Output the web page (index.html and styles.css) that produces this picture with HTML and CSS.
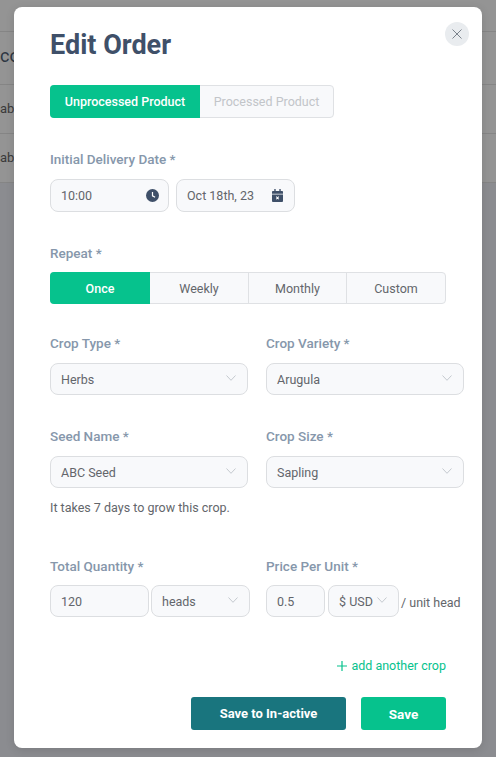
FILE: index.html
```html
<!DOCTYPE html>
<html lang="en">
<head>
    <meta charset="UTF-8">
    <meta name="viewport" content="width=device-width, initial-scale=1.0">
    <title>Edit Order</title>
    <link rel="stylesheet" href="styles.css">
</head>
<body>
    <!-- page behind the modal -->
    <div class="page">
        <div class="page-row page-row-top"></div>
        <div class="page-row page-row-head">co</div>
        <div class="page-row">ab</div>
        <div class="page-row">ab</div>
    </div>

    <div class="modal">
        <button class="close-button">
            <svg width="10" height="10" viewBox="0 0 10 10"><path d="M.5.5l9 9M9.500.5l-9 9" fill="none" stroke="#7b838c" stroke-width="1"/></svg>
        </button>

        <h1 class="title">Edit Order</h1>

        <div class="tabs">
            <div class="tab tab-active tab-product">Unprocessed Product</div>
            <div class="tab tab-muted tab-processed">Processed Product</div>
        </div>

        <div class="label label-delivery">Initial Delivery Date *</div>
        <div class="date-row">
            <div class="field field-date">
                <span>10:00</span>
                <svg class="icon-clock" width="13" height="13" viewBox="0 0 14 14"><circle cx="7" cy="7" r="7" fill="#3f5069"/><path d="M7 3.200V7.300L9.800 8.800" fill="none" stroke="#fff" stroke-width="1.300"/></svg>
            </div>
            <div class="field field-date">
                <span>Oct 18th, 23</span>
                <svg class="icon-calendar" width="11" height="13" viewBox="0 0 12 14"><path d="M2.500 0h1.500v2h4V0h1.500v2H11a1 1 0 0 1 1 1v2H0V3a1 1 0 0 1 1-1h1.500zM0 6h12v7a1 1 0 0 1-1 1H1a1 1 0 0 1-1-1z" fill="#3f5069"/><path d="M4.600 8.300l2.800 2.800M7.400 8.300l-2.800 2.800" fill="none" stroke="#fff" stroke-width="1.100"/></svg>
            </div>
        </div>

        <div class="label label-repeat">Repeat *</div>
        <div class="tabs tabs-repeat">
            <div class="tab tab-active tab-once">Once</div>
            <div class="tab tab-weekly">Weekly</div>
            <div class="tab tab-monthly">Monthly</div>
            <div class="tab tab-last">Custom</div>
        </div>

        <div class="form-grid form-grid-first">
            <div>
                <div class="label">Crop Type *</div>
                <div class="field field-select">
                    <span>Herbs</span>
                    <svg class="chevron" width="10" height="6" viewBox="0 0 10 6"><path d="M.5.500L5 5.300 9.500.5" fill="none" stroke="#c4c9cf" stroke-width="1"/></svg>
                </div>
            </div>
            <div>
                <div class="label">Crop Variety *</div>
                <div class="field field-select">
                    <span>Arugula</span>
                    <svg class="chevron" width="10" height="6" viewBox="0 0 10 6"><path d="M.5.500L5 5.300 9.500.5" fill="none" stroke="#c4c9cf" stroke-width="1"/></svg>
                </div>
            </div>
        </div>

        <div class="form-grid form-grid-second">
            <div>
                <div class="label">Seed Name *</div>
                <div class="field field-select">
                    <span>ABC Seed</span>
                    <svg class="chevron" width="10" height="6" viewBox="0 0 10 6"><path d="M.5.500L5 5.300 9.500.5" fill="none" stroke="#c4c9cf" stroke-width="1"/></svg>
                </div>
            </div>
            <div>
                <div class="label">Crop Size *</div>
                <div class="field field-select">
                    <span>Sapling</span>
                    <svg class="chevron" width="10" height="6" viewBox="0 0 10 6"><path d="M.5.500L5 5.300 9.500.5" fill="none" stroke="#c4c9cf" stroke-width="1"/></svg>
                </div>
            </div>
        </div>

        <p class="note">It takes 7 days to grow this crop.</p>

        <div class="form-grid form-grid-third">
            <div>
                <div class="label">Total Quantity *</div>
                <div class="field-group field-group-quantity">
                    <div class="field field-select field-qty"><span>120</span></div>
                    <div class="field field-select field-qty">
                        <span>heads</span>
                        <svg class="chevron" width="10" height="6" viewBox="0 0 10 6"><path d="M.5.500L5 5.300 9.500.5" fill="none" stroke="#c4c9cf" stroke-width="1"/></svg>
                    </div>
                </div>
            </div>
            <div>
                <div class="label">Price Per Unit *</div>
                <div class="field-group field-group-price">
                    <div class="field field-select field-price"><span>0.5</span></div>
                    <div class="field field-select field-currency">
                        <span>$ USD</span>
                        <svg class="chevron" width="10" height="6" viewBox="0 0 10 6"><path d="M.5.500L5 5.300 9.500.5" fill="none" stroke="#c4c9cf" stroke-width="1"/></svg>
                    </div>
                    <span class="unit-text">/ unit head</span>
                </div>
            </div>
        </div>

        <div class="add-crop">
            <svg width="10" height="10" viewBox="0 0 10 10"><path d="M5 0v10M0 5h10" fill="none" stroke="#06c28d" stroke-width="1.200"/></svg>
            <span>add another crop</span>
        </div>

        <div class="actions">
            <button class="btn btn-inactive">Save to In-active</button>
            <button class="btn btn-save">Save</button>
        </div>
    </div>
</body>
</html>
```

FILE: styles.css
```css
* {
    box-sizing: border-box;
}

html, body {
    height: 100%;
}

body {
    margin: 0;
    overflow: hidden;
    background-color: #8b8c90;
    font-family: 'Roboto', 'Liberation Sans', sans-serif;
    font-size: 12.5px;
    color: #63666b;
}

/* page behind the modal */
.page-row {
    height: 49px;
    border-bottom: 1px solid #858585;
    background-color: #949494;
    line-height: 48px;
    font-size: 13px;
    color: #3a3a3a;
    overflow: hidden;
}

.page-row-top {
    height: 32px;
}

.page-row-head {
    height: 53px;
    font-size: 18px;
    color: #2e3742;
}

.modal {
    position: absolute;
    top: 7px;
    left: 14px;
    width: 468px;
    height: 741px;
    padding: 0 36px;
    background-color: #fff;
    border-radius: 8px;
    box-shadow: 0 2px 10px rgba(0, 0, 0, 0.12);
}

.close-button {
    position: absolute;
    top: 15px;
    right: 13px;
    width: 24px;
    height: 24px;
    padding: 0;
    border: none;
    border-radius: 50%;
    background-color: #e9ecef;
    display: flex;
    align-items: center;
    justify-content: center;
}

.title {
    margin: 0;
    padding-top: 20px;
    font-size: 27px;
    line-height: 36px;
    font-weight: 700;
    color: #3f5069;
}

/* tabs */
.tabs {
    display: flex;
    width: 284px;
    height: 33px;
    margin-top: 22px;
    border: 1px solid #dfe1e4;
    border-radius: 4px;
    background-color: #f8f9fb;
}

.tabs-repeat {
    width: 396px;
    height: 32px;
    margin-top: 10px;
}

.tab {
    display: flex;
    align-items: center;
    justify-content: center;
    font-size: 12.5px;
    color: #63666b;
    margin: -1px 0;
}

.tab-active {
    margin-left: -1px;
    background-color: #06c28d;
    color: #fff;
    font-weight: 500;
    border-radius: 4px 0 0 4px;
}

.tab-product {
    width: 150px;
}

.tab-processed {
    flex: 1;
}

.tab-muted {
    color: #c2c5c9;
}

.tab-once {
    width: 100px;
}

.tab-weekly {
    width: 99px;
    border-right: 1px solid #dfe1e4;
}

.tab-monthly {
    width: 98px;
    border-right: 1px solid #dfe1e4;
}

.tab-last {
    flex: 1;
}

/* labels + fields */
.label {
    font-size: 13.5px;
    line-height: 18px;
    font-weight: 500;
    color: #8697ab;
}

.label-delivery {
    margin-top: 32px;
}

.label-repeat {
    margin-top: 32px;
}

.date-row {
    display: flex;
    gap: 7px;
    margin-top: 11px;
}

.field {
    display: flex;
    align-items: center;
    justify-content: space-between;
    height: 32px;
    padding: 0 10px;
    border: 1px solid #dcdee1;
    border-radius: 8px;
    background-color: #f8f9fb;
    font-size: 12.5px;
    color: #63666b;
}

.field-date {
    width: 119px;
    height: 33px;
}

.icon-clock {
    flex-shrink: 0;
    margin-right: -1px;
}

.icon-calendar {
    flex-shrink: 0;
    margin-right: 1px;
}

.form-grid {
    display: grid;
    grid-template-columns: 198px 198px;
    gap: 18px;
    width: 414px;
}

.form-grid-first {
    margin-top: 30px;
}

.form-grid-second {
    margin-top: 32px;
}

.form-grid-third {
    margin-top: 41px;
}

.form-grid .label {
    margin-bottom: 11px;
}

.form-grid-third .label {
    margin-bottom: 10px;
}

.chevron {
    flex-shrink: 0;
    margin-top: -2px;
    margin-right: 1px;
}

.note {
    margin: 12px 0 0;
    line-height: 16px;
    font-size: 12.5px;
    color: #63666b;
}

.field-group {
    display: flex;
    align-items: center;
}

.field-group-quantity {
    gap: 2px;
}

.field-qty {
    width: 99px;
    flex-shrink: 0;
}

.field-group-price {
    gap: 3px;
}

.field-price {
    width: 59px;
    flex-shrink: 0;
}

.field-currency {
    width: 71px;
    flex-shrink: 0;
}

.unit-text {
    margin-top: 2px;
    margin-left: -1px;
    white-space: nowrap;
    font-size: 12.5px;
    color: #63666b;
}

.add-crop {
    display: flex;
    align-items: center;
    justify-content: flex-end;
    gap: 4px;
    margin-top: 40px;
    line-height: 18px;
    font-size: 12.5px;
    color: #06c28d;
}

.actions {
    display: flex;
    justify-content: flex-end;
    gap: 15px;
    margin-top: 22px;
}

.btn {
    height: 33px;
    border: none;
    border-radius: 3px;
    font-family: inherit;
    font-size: 13px;
    font-weight: 700;
    color: #fff;
}

.btn-inactive {
    width: 155px;
    background-color: #19757e;
}

.btn-save {
    width: 85px;
    font-size: 13.5px;
    background-color: #06c28d;
}
```
